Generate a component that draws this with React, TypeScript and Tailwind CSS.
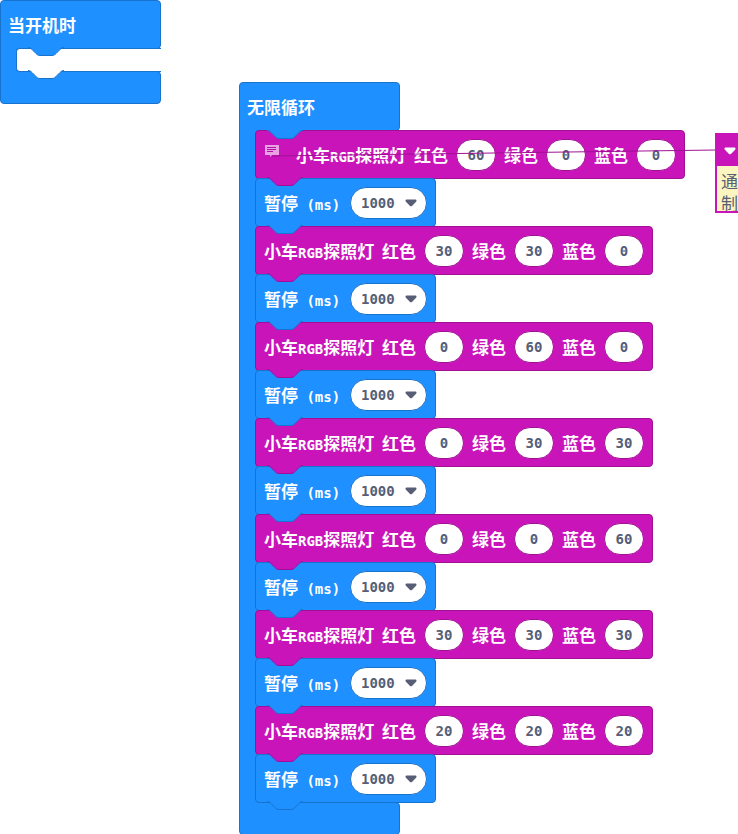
import type { ReactNode } from "react";

const FONT = "font-['DejaVu_Sans_Mono','Noto_Sans_CJK_SC',monospace]";
const CJK = "font-['Noto_Sans_CJK_SC',sans-serif]";

/* The tab that hangs from a block's lower edge into the block below. */
function Tab({ tone }: { tone: "blue" | "magenta" | "white" }) {
  const paint = {
    blue: "fill-[#1e90ff] stroke-[#1873cc]",
    magenta: "fill-[#c814b9] stroke-[#a01094]",
    white: "fill-white stroke-[#1873cc]",
  }[tone];
  return (
    <svg
      className={`absolute top-full left-[11px] z-10 -mt-px h-[10px] w-[36px] ${paint}`}
      viewBox="0 0 36 10"
      aria-hidden="true"
    >
      <path
        stroke="none"
        d="M0 0V.5C2 .5 3 1.5 4 2.5L8 6.5C9 7.5 10 8.5 12 8.5H24C26 8.5 27 7.5 28 6.5L32 2.5C33 1.5 34 .5 36 .5V0Z"
      />
      <path
        fill="none"
        d="M0 .5C2 .5 3 1.5 4 2.5L8 6.5C9 7.5 10 8.5 12 8.5H24C26 8.5 27 7.5 28 6.5L32 2.5C33 1.5 34 .5 36 .5"
      />
    </svg>
  );
}

function Label({ children, className = "" }: { children: ReactNode; className?: string }) {
  return (
    <span className={`shrink-0 text-[17px] leading-6 font-bold whitespace-pre text-white ${CJK} ${className}`}>
      {children}
    </span>
  );
}

function Latin({ children }: { children: ReactNode }) {
  return <span className={`text-sm ${FONT}`}>{children}</span>;
}

function Channel({ name, value }: { name: string; value: number }) {
  return (
    <label className="flex items-center gap-2">
      <Label>{name}</Label>
      <input
        type="text"
        inputMode="numeric"
        defaultValue={value}
        className={`h-8 w-10 rounded-full border border-[#a01094] bg-white text-center text-sm font-bold text-[#575e75] outline-none ${FONT}`}
      />
    </label>
  );
}

function LightBlock({ rgb, commented = false }: { rgb: number[]; commented?: boolean }) {
  return (
    <div className="relative flex h-[49px] w-fit items-center gap-2 rounded border border-[#a01094] bg-[#c814b9] px-2">
      {commented && (
        <button type="button" aria-label="注释" className="mr-2 -mt-2 flex w-4 justify-center">
          <svg className="h-4 w-4 opacity-60" viewBox="0 0 16 16" aria-hidden="true">
            <path fill="#fff" d="M1 2H15V12H8L6 14V12H1Z" />
            <path stroke="#a01094" fill="none" d="M3 4.5H12M3 6.5H12M3 8.5H9" />
          </svg>
        </button>
      )}
      <Label className="w-[110px]">
        小车<Latin>RGB</Latin>探照灯
      </Label>
      <Channel name="红色" value={rgb[0]} />
      <Channel name="绿色" value={rgb[1]} />
      <Channel name="蓝色" value={rgb[2]} />
      <Tab tone="magenta" />
    </div>
  );
}

function PauseBlock() {
  return (
    <div className="relative flex h-[49px] w-fit items-center rounded border border-[#1873cc] bg-[#1e90ff] px-2">
      <label className="flex items-center gap-2">
        <Label className="w-[78px]">
          暂停<Latin> (ms)</Latin>
        </Label>
        <span className="relative flex">
          <select
            defaultValue="1000"
            className={`h-8 w-[77px] appearance-none rounded-full border border-[#1873cc] bg-white pr-6 pl-[10px] text-sm font-bold text-[#575e75] outline-none ${FONT}`}
          >
            <option>1000</option>
          </select>
          <svg
            className="pointer-events-none absolute top-3 right-[10px] h-2 w-3"
            viewBox="0 0 12 8"
            aria-hidden="true"
          >
            <path
              fill="#575e75"
              d="M1.6 .5H10.4C11.6 .5 11.9 1.9 11.1 2.7L7 6.9Q6 7.8 5 6.9L.9 2.7C.1 1.9 .4 .5 1.6 .5Z"
            />
          </svg>
        </span>
      </label>
      <Tab tone="blue" />
    </div>
  );
}

/* C-shaped event block: header, spine with its mouth, and foot. */
function EventBlock({ title, children }: { title: string; children: ReactNode }) {
  return (
    <section className="flex w-fit flex-col">
      <header className="relative flex h-[49px] w-[161px] items-center rounded rounded-bl-none border border-[#1873cc] bg-[#1e90ff] px-[7px]">
        <Label>{title}</Label>
      </header>
      <div className="-my-px flex">
        <div className="relative w-5 border-l border-[#1873cc] bg-[#1e90ff]" />
        <div className="relative z-10 -ml-1 flex flex-col -space-y-px">{children}</div>
      </div>
      <footer className="h-[33px] w-[161px] rounded rounded-tl-none border border-[#1873cc] bg-[#1e90ff]" />
    </section>
  );
}

const LIGHTS = [
  [60, 0, 0],
  [30, 30, 0],
  [0, 60, 0],
  [0, 30, 30],
  [0, 0, 60],
  [30, 30, 30],
  [20, 20, 20],
];

export default function App() {
  return (
    <main className="relative min-h-screen overflow-hidden bg-white">
      <div className="absolute top-0 left-0">
        <EventBlock title="当开机时">
          <div className="relative h-6 w-[145px] rounded-l border border-r-0 border-[#1873cc] bg-white">
            <div className="absolute -top-px left-0">
              <Tab tone="blue" />
            </div>
            <Tab tone="white" />
          </div>
        </EventBlock>
      </div>

      <div className="absolute top-[82px] left-[239px]">
        <EventBlock title="无限循环">
          {LIGHTS.flatMap((rgb, i) => [
            <div key={`light-${i}`} className="relative">
              {i === 0 && (
                <div className="absolute top-0 left-px z-10 h-px">
                  <Tab tone="blue" />
                </div>
              )}
              <LightBlock rgb={rgb} commented={i === 0} />
            </div>,
            <PauseBlock key={`pause-${i}`} />,
          ])}
        </EventBlock>
      </div>

      <svg
        className="pointer-events-none absolute top-[149px] left-[272px] z-20 h-2 w-[444px]"
        viewBox="0 0 444 8"
        aria-hidden="true"
      >
        <path d="M0 7L444 1" stroke="#a01094" fill="none" />
      </svg>

      <aside className="absolute top-[133px] left-[715px] z-20 w-[200px] border-2 border-[#c814b9] bg-[#fbf5bf]">
        <button type="button" aria-label="折叠注释" className="flex h-[31px] w-full items-center bg-[#c814b9] pl-[7px]">
          <svg className="h-2 w-3" viewBox="0 0 12 8" aria-hidden="true">
            <path
              fill="#fff"
              d="M1.6 .5H10.4C11.6 .5 11.9 1.9 11.1 2.7L7 6.9Q6 7.8 5 6.9L.9 2.7C.1 1.9 .4 .5 1.6 .5Z"
            />
          </svg>
        </button>
        <textarea
          aria-label="注释"
          defaultValue={"通过\n制小"}
          className={`block h-[45px] w-full resize-none overflow-hidden pt-1 pl-1 text-[17px] leading-[22px] text-[#575e75] outline-none ${CJK}`}
        />
      </aside>
    </main>
  );
}
